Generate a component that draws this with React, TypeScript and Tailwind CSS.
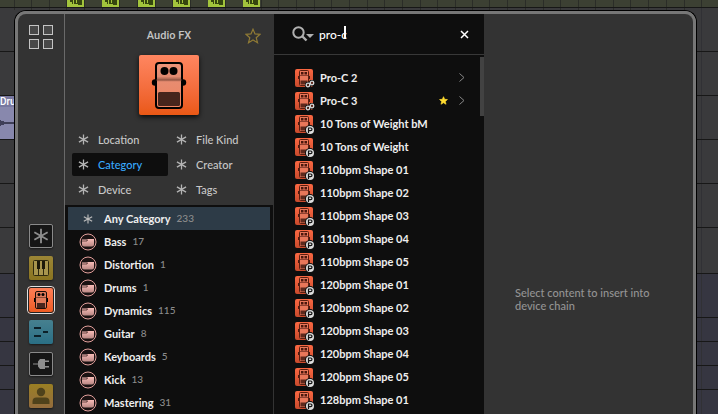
import { useState } from "react";

const FX_FONT = "font-['Roboto','Liberation_Sans',sans-serif]";

const filters = ["Location", "File Kind", "Category", "Creator", "Device", "Tags"];

const categories = [
  { name: "Any Category", count: 233 },
  { name: "Bass", count: 17 },
  { name: "Distortion", count: 1 },
  { name: "Drums", count: 1 },
  { name: "Dynamics", count: 115 },
  { name: "Guitar", count: 8 },
  { name: "Keyboards", count: 5 },
  { name: "Kick", count: 13 },
  { name: "Mastering", count: 31 },
];

const results = [
  { name: "Pro-C 2", plugin: true },
  { name: "Pro-C 3", plugin: true, starred: true },
  { name: "10 Tons of Weight bM" },
  { name: "10 Tons of Weight" },
  { name: "110bpm Shape 01" },
  { name: "110bpm Shape 02" },
  { name: "110bpm Shape 03" },
  { name: "110bpm Shape 04" },
  { name: "110bpm Shape 05" },
  { name: "120bpm Shape 01" },
  { name: "120bpm Shape 02" },
  { name: "120bpm Shape 03" },
  { name: "120bpm Shape 04" },
  { name: "120bpm Shape 05" },
  { name: "128bpm Shape 01" },
];

function Asterisk({ className }: { className: string }) {
  return (
    <svg viewBox="0 0 12 12" className={className} fill="none" stroke="currentColor" strokeWidth="1.4">
      <path d="M6 .5v11M1 3.200l10 5.600M11 3.200L1 8.800" />
    </svg>
  );
}

function Star({ filled = false, className }: { filled?: boolean; className: string }) {
  return (
    <svg viewBox="0 0 16 16" className={className} fill={filled ? "currentColor" : "none"} stroke="currentColor" strokeWidth="1.2">
      <path d="M8 1.2l2 4.700 5 .4-3.800 3.400 1.300 5L8 12l-4.500 2.700 1.300-5L1 6.300l5-.4z" />
    </svg>
  );
}

function Pedal() {
  return (
    <svg viewBox="0 0 60 60" className="size-[60px]">
      <defs>
        <linearGradient id="pedal-shade" x2="0" y2="1">
          <stop offset="0" stopColor="#ee9479" />
          <stop offset=".3" stopColor="#e08a70" />
          <stop offset=".37" stopColor="#a0604c" />
          <stop offset=".42" stopColor="#e88c70" />
          <stop offset="1" stopColor="#ee8460" />
        </linearGradient>
      </defs>
      <circle cx="16" cy="27.500" r="3.200" />
      <circle cx="44" cy="27.500" r="3.200" />
      <rect x="17" y="8" width="26" height="45" rx="3" fill="url(#pedal-shade)" stroke="#000" strokeWidth="2" />
      <path d="M17 25h26" stroke="#8a5040" strokeWidth=".6" />
      <rect x="19" y="37" width="22" height="14" rx="1.500" fill="#47251c" />
      <circle cx="25.500" cy="16" r="4" />
      <circle cx="34.500" cy="16" r="4" />
    </svg>
  );
}

function MiniPedal() {
  return (
    <svg viewBox="0 0 18 18" className="size-[18px]">
      <path d="M3 7h2v3H3zM13 7h2v3h-2z" fill="#4a1a10" />
      <rect x="4.500" y="1.500" width="9" height="15" rx="1" fill="#e8775a" stroke="#5a1f10" />
      <path d="M6 3h2.500v2.500H6zM9.500 3H12v2.500H9.500z" fill="#4a170c" />
      <path d="M5 6.500h8" stroke="#8f4030" />
      <path d="M5.500 11.500h7v4h-7z" fill="#5c281c" />
    </svg>
  );
}

function ResultIcon({ plugin }: { plugin?: boolean }) {
  return (
    <span className="relative size-[18px] shrink-0 rounded-xs bg-linear-to-b from-[#fb6842] to-[#c94a2c]">
      <MiniPedal />
      {plugin ? (
        <svg viewBox="0 0 10 8" className="absolute -right-0.5 -bottom-px h-2 w-2.5" fill="none">
          <circle cx="3" cy="5" r="2" stroke="#111" strokeWidth="2.500" />
          <circle cx="7" cy="3" r="2" stroke="#111" strokeWidth="2.500" />
          <circle cx="3" cy="5" r="1.800" stroke="#d8d8d8" strokeWidth="1.300" />
          <circle cx="7" cy="3" r="1.800" stroke="#d8d8d8" strokeWidth="1.300" />
        </svg>
      ) : (
        <svg viewBox="0 0 10 10" className="absolute -right-0.5 -bottom-0.5 size-2.5">
          <circle cx="5" cy="5" r="5" fill="#111" />
          <circle cx="5" cy="5" r="4" fill="#ddd" />
          <path d="M3.500 8V3h2.200a1.300 1.300 0 0 1 0 2.600H3.500" fill="none" stroke="#111" strokeWidth="1.200" />
        </svg>
      )}
    </span>
  );
}

function FolderIcon() {
  return (
    <svg viewBox="0 0 18 18" className="size-[18px] shrink-0">
      <defs>
        <linearGradient id="folder-shade" x2="0" y2="1">
          <stop offset="0" stopColor="#f9bdb8" />
          <stop offset="1" stopColor="#b98783" />
        </linearGradient>
      </defs>
      <circle cx="9" cy="9" r="8" fill="#1a1212" stroke="#e2a09c" />
      <path d="M3 6.500h5V6h7v5.500a2 2 0 0 1-2 2H5a2 2 0 0 1-2-2z" fill="url(#folder-shade)" />
      <path d="M3 8h5V7h1" fill="none" stroke="#4a2b2a" strokeWidth=".8" />
    </svg>
  );
}

const railBase = "flex size-6 items-center justify-center rounded-xs shadow-[0_1px_2px_#0008]";

function Rail() {
  return (
    <nav aria-label="Content types" className="flex w-[47px] shrink-0 flex-col items-center justify-between border-r border-[#6a6a6a] pt-[11px] pb-1.5">
      <button aria-label="All content" className="grid grid-cols-2 gap-1">
        {[0, 1, 2, 3].map((i) => (
          <span key={i} className="size-2.5 border border-[#c4c4c4] bg-[#484848]" />
        ))}
      </button>
      <div className="flex flex-col items-center gap-2">
        <button aria-label="Everything" className={`${railBase} border border-[#8a8a8a] bg-[#161616] text-[#8c8c8c]`}>
          <Asterisk className="size-4" />
        </button>
        <button aria-label="Instruments" className={`${railBase} bg-linear-to-b from-[#9c8636] to-[#8a7420]`}>
          <svg viewBox="0 0 24 24" className="size-6">
            <rect x="4.500" y="4.500" width="15" height="15" rx="1" fill="#a8954e" stroke="#2e280e" />
            <path d="M9.500 13v6M14.500 13v6" stroke="#2e280e" />
            <path d="M8 5h3v8H8zM13 5h3v8h-3z" fill="#1c180a" />
          </svg>
        </button>
        <button aria-label="Audio FX" className="-m-0.5 flex size-7 items-center justify-center rounded-sm border border-[#e0e0e0] bg-linear-to-b from-[#ff8058] to-[#ee5a1e] outline-1 -outline-offset-2 outline-[#222]">
          <svg viewBox="0 0 28 28" className="size-7 shrink-0">
            <path d="M7 12h3v4H7zM18 12h3v4h-3z" />
            <rect x="8.500" y="5.500" width="11" height="17" rx="1.500" fill="#e07a5a" stroke="#1c0d08" />
            <circle cx="12" cy="8.500" r="1.500" />
            <circle cx="16" cy="8.500" r="1.500" />
            <path d="M9 11.500h10" stroke="#8a4a34" />
            <path d="M10 17h8v5h-8z" fill="#47251c" />
          </svg>
        </button>
        <button aria-label="Note FX" className={`${railBase} bg-linear-to-b from-[#46808f] to-[#2a6f85]`}>
          <svg viewBox="0 0 24 24" className="size-6" stroke="#0c2028" strokeWidth="2">
            <path d="M5 8h7M5 16h7M14 12h5" />
          </svg>
        </button>
        <button aria-label="Plug-ins" className={`${railBase} border border-[#8a8a8a] bg-[#161616]`}>
          <svg viewBox="0 0 22 22" className="size-[22px]" fill="#8f8f8f">
            <path d="M3 10.500h5v1H3z" />
            <path d="M8 8.500l2-2.500h5v10h-5l-2-2.500zM15 7.500h4V9h-4zM15 13h4v1.500h-4z" />
          </svg>
        </button>
        <button aria-label="User" className={`${railBase} bg-linear-to-b from-[#9a7f22] to-[#936c3c]`}>
          <svg viewBox="0 0 24 24" className="size-6" fill="#4f421b">
            <circle cx="12" cy="8" r="4.200" />
            <path d="M3.500 20v-2.500a4 4 0 0 1 4-4h9a4 4 0 0 1 4 4V20z" />
          </svg>
        </button>
      </div>
    </nav>
  );
}

function FilterColumn() {
  const [active, setActive] = useState("Category");
  const [category, setCategory] = useState("Any Category");
  return (
    <section className="flex w-[209px] shrink-0 flex-col border-r border-[#333]">
      <header className="grid grid-cols-[1fr_auto_1fr] items-center px-3 pt-3 text-[#c4c4c4]">
        <h1 className={`col-start-2 text-[11px] leading-[19px] font-medium ${FX_FONT}`}>Audio FX</h1>
        <button aria-label="Favourites" className="justify-self-end text-[#8f7a35]">
          <Star className="size-4" />
        </button>
      </header>
      <div className="mx-auto mt-2.5 rounded-xs bg-linear-to-b from-[#ff8660] to-[#ea5814] shadow-[0_2px_5px_#000c]">
        <Pedal />
      </div>
      <div className="grid grid-cols-[96px_1fr] gap-x-0.5 px-[7px] pt-3 pb-[3px]">
        {filters.map((name) => (
          <button
            key={name}
            onClick={() => setActive(name)}
            className={
              name === active
                ? "my-px flex h-[23px] items-center gap-[9px] rounded-xs bg-[#0e0e0e] px-1.5 font-medium text-[#38aaff]"
                : "my-px flex h-[23px] items-center gap-[9px] px-1.5 font-medium text-[#c8c8c8]"
            }
          >
            <Asterisk className="size-[11px] text-[#b4b4b4]" />
            {name}
          </button>
        ))}
      </div>
      <ul className="min-h-0 flex-1 overflow-hidden bg-[#0e0e0e] px-[3px] pt-0.5">
        {categories.map(({ name, count }) => (
          <li key={name}>
            <button
              onClick={() => setCategory(name)}
              className={
                name === category
                  ? "flex h-[23px] w-full items-center bg-[#2d3b47] pl-[11px] text-[#eee]"
                  : "flex h-[23px] w-full items-center pl-[11px] text-[#eee]"
              }
            >
              {name === "Any Category" ? (
                <span className="flex w-[18px] justify-center text-[#bbb]">
                  <Asterisk className="size-[10px]" />
                </span>
              ) : (
                <FolderIcon />
              )}
              <span className="ml-[7px] font-bold">{name}</span>
              <span className="ml-1.5 text-[10px] leading-[17px] font-medium text-[#8c8c8c]">{count}</span>
            </button>
          </li>
        ))}
      </ul>
    </section>
  );
}

function ResultColumn() {
  const [query, setQuery] = useState("pro-c");
  return (
    <section className="flex w-[210px] shrink-0 flex-col bg-[#0e0e0e]">
      <div className="flex h-[41px] shrink-0 items-center border-b border-[#383838] pr-[15px] pl-[18px]">
        <svg viewBox="0 0 22 16" className="h-4 w-[22px] shrink-0" fill="none" stroke="#b0b0b0">
          <circle cx="6.500" cy="6.500" r="5.200" strokeWidth="2" />
          <path d="M10.500 10.500l4 4" strokeWidth="2.400" />
          <path d="M14 8h8l-4 4z" fill="#b0b0b0" stroke="none" />
        </svg>
        <span className="relative ml-[5px] flex-1">
          <input
            aria-label="Search content"
            value={query}
            onChange={(e) => setQuery(e.target.value)}
            className="w-full text-xs leading-4 font-medium text-white caret-white outline-none"
          />
          <span className="absolute top-0 left-[25px] h-[13px] w-0.5 bg-white" />
        </span>
        <button aria-label="Clear search" onClick={() => setQuery("")}>
          <svg viewBox="0 0 9 9" className="size-[9px]" stroke="#fff" strokeWidth="1.500">
            <path d="M1 1l7 7M8 1l-7 7" />
          </svg>
        </button>
      </div>
      <div className="flex min-h-0 flex-1">
        <ul className="min-w-0 flex-1 overflow-hidden pt-[11px] pl-[21px]">
          {results.map(({ name, plugin, starred }) => (
            <li key={name}>
              <button className="flex h-[23px] w-full items-center pr-[15px] text-[#eee]">
                <ResultIcon plugin={plugin} />
                <span className="ml-[7px] font-bold">{name}</span>
                <span className="ml-auto flex items-center gap-[11px]">
                  {starred && <Star filled className="size-[9px] text-[#ffdc30]" />}
                  {plugin && (
                    <svg viewBox="0 0 6 9" className="h-[9px] w-1.5" fill="none" stroke="#888">
                      <path d="M.5.5l4.500 4-4.500 4" />
                    </svg>
                  )}
                </span>
              </button>
            </li>
          ))}
        </ul>
        <div className="w-1 pt-0.5">
          <div className="h-[59px] bg-[#424242]" />
        </div>
      </div>
    </section>
  );
}

// Arranger timeline visible around the edges of the popup
function Arranger() {
  const clips = [67, 102, 138, 173, 208, 243];
  const lines = [14, 31, 49, 66, 84, 102, 119, 137, 155, 172, 190, 208, 225, 243, 261, 278, 296, 314, 331, 349, 367, 384, 402, 420, 437, 455, 472, 489, 507, 525, 543, 560, 578, 595, 613, 630, 648, 666, 684, 701];
  return (
    <svg aria-hidden="true" className="absolute inset-0 size-full bg-[#3a3a3c]" shapeRendering="crispEdges">
      <rect width="100%" height="7" fill="#3c4033" />
      <rect y="274" width="100%" height="140" fill="#363641" />
      <path d={lines.map((x) => `M${x}.5 0V10`).join("")} stroke="#2b2d28" />
      <path d="M701.500 8V414" stroke="#313135" />
      <path d="M0 7.500H718M0 51.500H718M0 95.500H718M0 139.500H718M0 183.500H718M0 227.500H718M0 273.500H718M0 317.500H718M0 341.500H718M0 365.500H718M0 389.500H718" stroke="#171717" />
      {clips.map((x) => (
        <g key={x}>
          <rect x={x} width="17" height="7" fill="#a2c43c" />
          <path d={`M${x + 3} 0h3v4h-1v-2h-2zM${x + 7} 0h2v3h1V0h5v5h-4V4H${x + 7}z`} fill="#35460f" />
        </g>
      ))}
      <rect y="96" width="14" height="43" fill="#8888ad" />
      <rect y="96" width="14" height="11" fill="#7878a0" />
      <path d="M0 120l5 2h9v2H5l-5 2z" fill="#3f3f58" />
      <text x="0" y="105" fill="#fff" fontSize="10" fontWeight="500" className={FX_FONT}>Drums</text>
    </svg>
  );
}

export default function App() {
  return (
    <div className="relative h-screen overflow-hidden pt-2.5 pr-[21px] pl-3.5 font-['Lato','Liberation_Sans',sans-serif] text-[11px] leading-[17px]">
      <Arranger />
      <main className="relative flex h-full overflow-hidden rounded-t-[12px] border border-b-0 border-black bg-[#777]">
        <div className="flex min-w-0 flex-1 overflow-hidden rounded-t-[11px] border-3 border-b-0 border-[#777] bg-[#333]">
          <Rail />
          <FilterColumn />
          <ResultColumn />
          <section className="flex flex-1 items-center px-[31px]">
            <p className="mt-[169px] max-w-[150px] leading-[13px] font-medium text-[#949494]">Select content to insert into device chain</p>
          </section>
        </div>
      </main>
    </div>
  );
}
